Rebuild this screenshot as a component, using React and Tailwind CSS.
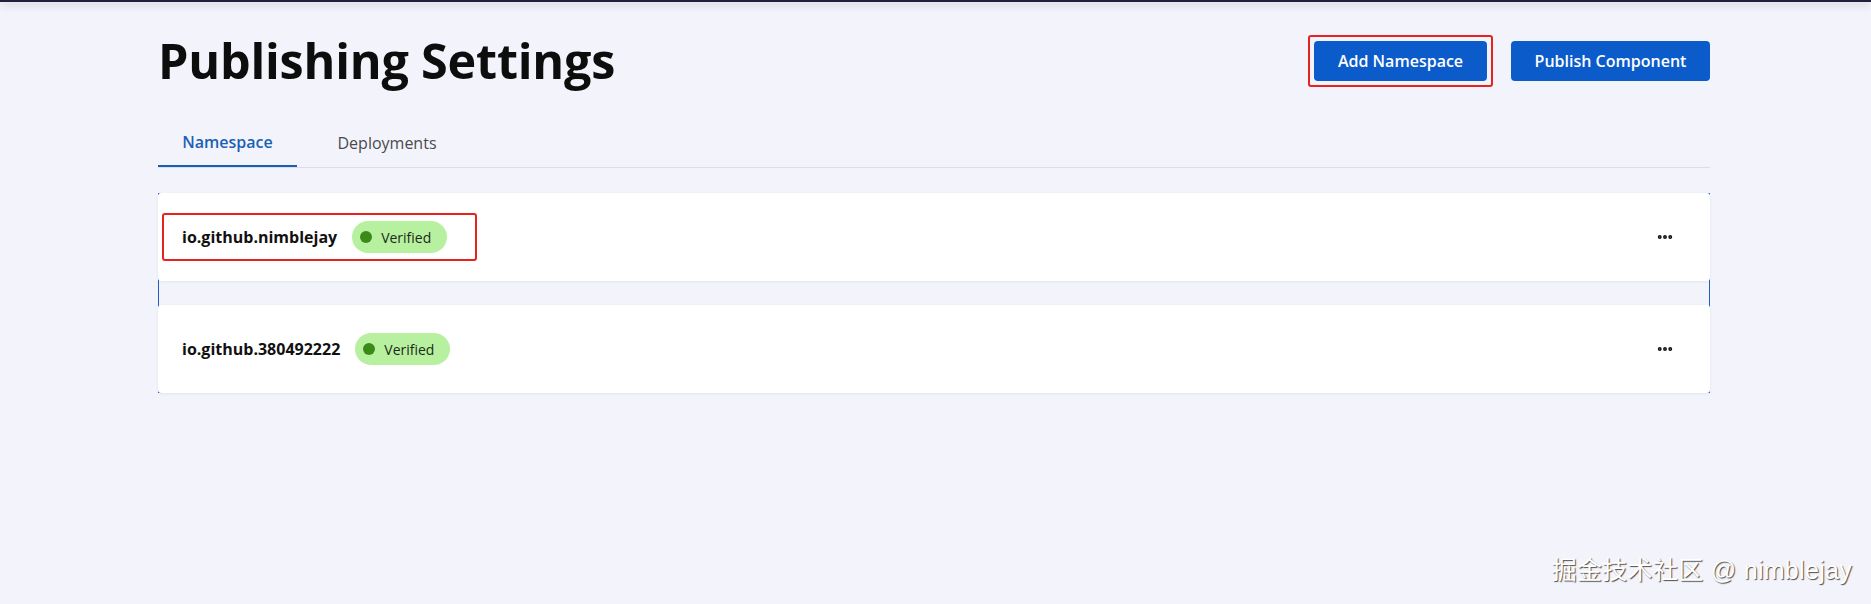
import { MoreHorizontal } from 'lucide-react';

const NAMESPACES = [
  { id: 'nimblejay', name: 'io.github.nimblejay', status: 'Verified', marked: true },
  { id: '380492222', name: 'io.github.380492222', status: 'Verified', marked: false },
];

function Badge({ children }) {
  return (
    <span className="flex items-center gap-[9px] h-8 pl-2 pr-4 rounded-full bg-[#b7f1a0] text-[14px] text-[#1d2a1a]">
      <span className="w-3 h-3 rounded-full bg-[#3b8a17]" />
      {children}
    </span>
  );
}

function NamespaceRow({ ns, first, last }) {
  const label = (
    <div className="flex items-center gap-[15px]">
      <span className="text-[16px] font-bold text-[#111]">{ns.name}</span>
      <Badge>{ns.status}</Badge>
    </div>
  );

  return (
    <div
      className={
        '-mx-px h-[88px] flex items-center justify-between bg-white rounded-[3px] shadow-[0_1px_3px_rgba(30,40,80,0.08)] ' +
        (first ? '-mt-px ' : '') +
        (last ? '-mb-px' : '')
      }
    >
      <div className="pl-[4px]">
        {ns.marked ? (
          <div className="h-12 w-[315px] pl-[18px] flex items-center border-2 border-[#e8231f] rounded-[3px]">{label}</div>
        ) : (
          <div className="pl-[20px]">{label}</div>
        )}
      </div>
      <button className="mr-[36px] text-[#111]">
        <MoreHorizontal size={18} strokeWidth={3.2} />
      </button>
    </div>
  );
}

export default function App() {
  return (
    <div
      className="relative min-h-[604px] bg-[#f3f4fb] overflow-hidden"
      style={{ fontFamily: '"Open Sans", "Noto Sans", sans-serif' }}
    >
      <div className="h-[2px] bg-[#221f3c] shadow-[0_2px_8px_rgba(20,20,50,0.35)]" />

      <div className="w-[1552px] ml-[158px] pt-[26px]">
        <div className="flex items-start justify-between">
          <h1 className="text-[48.5px] leading-[64px] font-bold text-[#0d0d0d] tracking-[-0.2px]">Publishing Settings</h1>
          <div className="flex items-center gap-6 pt-[13px]">
            <div className="p-1 border-2 border-[#e8231f] rounded-[3px] -m-[6px]">
              <button className="h-10 w-[173px] rounded-[4px] bg-[#0b5bcb] text-white text-[16px] font-semibold">
                Add Namespace
              </button>
            </div>
            <button className="h-10 w-[199px] rounded-[4px] bg-[#0b5bcb] text-white text-[16px] font-semibold">
              Publish Component
            </button>
          </div>
        </div>

        <div className="mt-[34px] flex border-b border-[#dcdee6]">
          <button className="w-[139px] h-[41px] -mb-px border-b-2 border-[#1a5fb1] text-[16px] font-semibold text-[#1b5fb6] pb-[7px]">
            Namespace
          </button>
          <button className="w-[180px] h-[41px] text-[16px] text-[#4a4a4f] pb-[7px]">Deployments</button>
        </div>

        <div className="mt-[25px] flex flex-col gap-6 border border-[#1f5fbf]">
          {NAMESPACES.map((ns, i) => (
            <NamespaceRow key={ns.id} ns={ns} first={i === 0} last={i === NAMESPACES.length - 1} />
          ))}
        </div>
      </div>

      <div
        className="absolute right-[19px] bottom-[15px] text-[25px] text-white tracking-[0.3px] [text-shadow:1px_1px_1px_rgba(60,60,60,0.9)]"
        style={{ fontFamily: '"Liberation Sans", "Noto Sans CJK SC", sans-serif' }}
      >
        掘金技术社区 @ nimblejay
      </div>
    </div>
  );
}
